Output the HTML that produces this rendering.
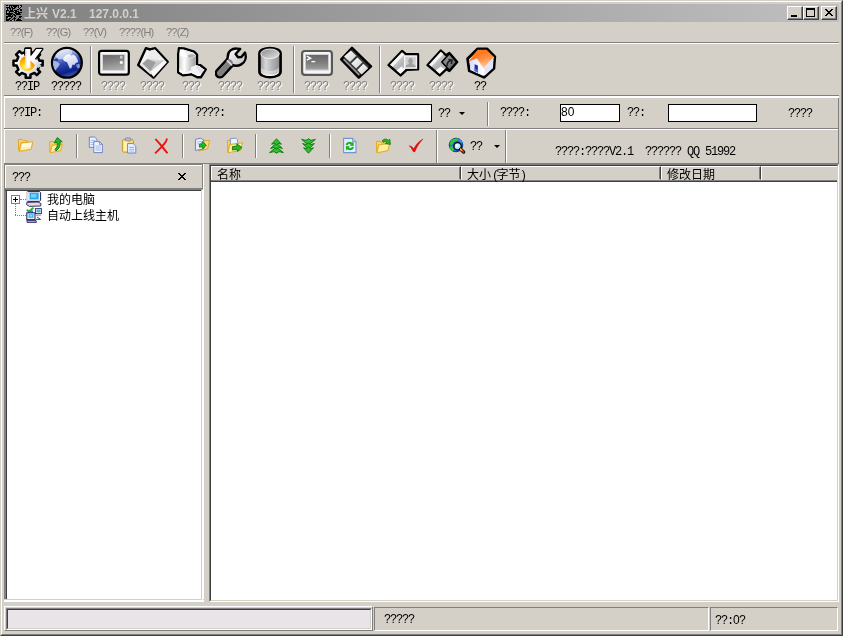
<!DOCTYPE html>
<html lang="zh">
<head>
<meta charset="utf-8">
<title>上兴 V2.1</title>
<style>
html,body{margin:0;padding:0;}
body{width:843px;height:636px;overflow:hidden;background:#d4d0c8;position:relative;
 font-family:"Liberation Mono","Noto Sans CJK SC",monospace;font-size:12px;color:#000;}
.abs{position:absolute;}
#frame div{position:absolute;}
.mono{font-family:"Liberation Mono","Noto Sans CJK SC",monospace;font-size:12px;letter-spacing:-1.2px;line-height:12px;white-space:pre;}
.cjk{font-family:"Liberation Sans","Noto Sans CJK SC",sans-serif;font-size:12px;line-height:12px;white-space:pre;}
.tah{font-family:"Liberation Sans","Noto Sans CJK SC",sans-serif;font-size:11px;line-height:12px;white-space:pre;}
.menu{letter-spacing:-0.75px;color:#808080;}
.dis{color:#808080;text-shadow:1px 1px 0 #fff;}
.hl{position:absolute;height:1px;}
.vl{position:absolute;width:1px;}
.inp{position:absolute;background:#fff;border:1px solid #000;box-sizing:border-box;}
.sep{position:absolute;width:1px;background:#808080;border-right:1px solid #fff;}
.lbl{position:absolute;text-align:center;width:60px;}
.hcell{height:14px;box-sizing:border-box;border:1px solid;border-color:#fff #404040 #d4d0c8 #fff;box-shadow:inset -1px 0 0 #808080;}
.cbtn{width:16px;height:14px;box-sizing:border-box;background:#d4d0c8;border:1px solid;border-color:#fff #404040 #404040 #fff;box-shadow:inset -1px -1px 0 #808080;}
</style>
</head>
<body>
<div id="root" style="position:absolute;left:0;top:0;width:843px;height:636px;will-change:transform;">
<!-- window frame -->
<div id="frame">
 <div style="left:0;top:0;width:843px;height:636px;box-sizing:border-box;border:1px solid;border-color:#d4d0c8 #404040 #404040 #d4d0c8;"></div>
 <div style="left:1px;top:1px;width:841px;height:634px;box-sizing:border-box;border:1px solid;border-color:#fff #808080 #808080 #fff;"></div>
</div>

<!-- title bar -->
<div class="abs" id="title" style="left:4px;top:4px;width:835px;height:18px;background:linear-gradient(to right,#808080 0%,#c0c0c0 100%);"></div>
<svg class="abs" style="left:6px;top:5px" width="16" height="16" viewBox="0 0 16 16" shape-rendering="crispEdges">
 <path d="M0 0h2v1h-2zM3 0h10v1h-10zM14 0h2v1h-2zM3 1h1v1h-1zM5 1h1v1h-1zM7 1h4v1h-4zM12 1h1v1h-1zM15 1h1v1h-1zM0 2h4v1h-4zM5 2h2v1h-2zM8 2h2v1h-2zM12 2h1v1h-1zM14 2h1v1h-1zM1 3h1v1h-1zM3 3h2v1h-2zM6 3h3v1h-3zM13 3h1v1h-1zM1 4h1v1h-1zM4 4h1v1h-1zM6 4h1v1h-1zM11 4h2v1h-2zM14 4h2v1h-2zM0 5h3v1h-3zM4 5h3v1h-3zM8 5h3v1h-3zM14 5h2v1h-2zM0 6h1v1h-1zM3 6h5v1h-5zM9 6h4v1h-4zM0 7h1v1h-1zM3 7h1v1h-1zM8 7h3v1h-3zM12 7h4v1h-4zM0 8h7v1h-7zM9 8h5v1h-5zM0 9h6v1h-6zM7 9h2v1h-2zM10 9h5v1h-5zM2 10h3v1h-3zM6 10h1v1h-1zM8 10h2v1h-2zM0 11h7v1h-7zM9 11h1v1h-1zM13 11h3v1h-3zM0 12h2v1h-2zM5 12h1v1h-1zM8 12h1v1h-1zM13 12h2v1h-2zM0 13h1v1h-1zM3 13h2v1h-2zM7 13h3v1h-3zM12 13h1v1h-1zM0 14h4v1h-4zM6 14h1v1h-1zM8 14h1v1h-1zM11 14h4v1h-4zM0 15h3v1h-3zM4 15h2v1h-2zM8 15h1v1h-1zM10 15h6v1h-6z" fill="#000"/>
 <path d="M0 1h1v1h-1zM2 1h1v1h-1zM13 1h2v1h-2zM7 2h1v1h-1zM13 2h1v1h-1zM11 3h1v1h-1zM15 3h1v1h-1zM0 4h1v1h-1zM8 6h1v1h-1zM13 6h1v1h-1zM1 7h1v1h-1zM11 7h1v1h-1zM8 8h1v1h-1zM2 12h1v1h-1zM15 14h1v1h-1zM6 15h1v1h-1z" fill="#b0b0b0"/>
</svg>
<div class="abs" style="left:24px;top:7px;color:#d4d0c8;font-family:'Liberation Sans','Noto Sans CJK SC',sans-serif;font-weight:bold;font-size:12px;line-height:14px;white-space:pre;">上兴</div>
<div class="abs" style="left:52px;top:7px;color:#d4d0c8;font-family:'Liberation Sans','Noto Sans CJK SC',sans-serif;font-weight:bold;font-size:12px;line-height:14px;white-space:pre;">V2.1</div>
<div class="abs" style="left:89px;top:7px;color:#d4d0c8;font-family:'Liberation Sans','Noto Sans CJK SC',sans-serif;font-weight:bold;font-size:12px;line-height:14px;white-space:pre;">127.0.0.1</div>

<!-- caption buttons -->
<div class="abs cbtn" style="left:787px;top:6px;"><div style="position:absolute;left:3px;top:8px;width:6px;height:2px;background:#000"></div></div>
<div class="abs cbtn" style="left:803px;top:6px;"><div style="position:absolute;left:2px;top:1px;width:9px;height:9px;box-sizing:border-box;border:1px solid #000;border-top-width:2px"></div></div>
<div class="abs cbtn" style="left:821px;top:6px;"><svg style="position:absolute;left:3px;top:2px" width="8" height="7" viewBox="0 0 8 7" shape-rendering="crispEdges"><path d="M0 0h2v1h-2zM6 0h2v1h-2zM1 1h2v1h-2zM5 1h2v1h-2zM2 2h4v1h-4zM3 3h2v1h-2zM2 4h4v1h-4zM1 5h2v1h-2zM5 5h2v1h-2zM0 6h2v1h-2zM6 6h2v1h-2z" fill="#000"/></svg></div>

<!-- menu bar -->
<div class="abs tah menu" style="left:10px;top:26px;">??(F)</div>
<div class="abs tah menu" style="left:46px;top:26px;">??(G)</div>
<div class="abs tah menu" style="left:83px;top:26px;">??(V)</div>
<div class="abs tah menu" style="left:119px;top:26px;">????(H)</div>
<div class="abs tah menu" style="left:166px;top:26px;">??(Z)</div>

<!-- toolbar 1 -->
<div class="hl" style="left:4px;top:42px;width:835px;background:#808080"></div>
<div class="hl" style="left:4px;top:43px;width:835px;background:#fff"></div>
<div class="hl" style="left:4px;top:95px;width:835px;background:#808080"></div>

<!-- address band -->
<div class="hl" style="left:4px;top:96px;width:835px;height:2px;background:#fff"></div>
<div class="vl" style="left:4px;top:96px;height:32px;background:#fff"></div>
<div class="vl" style="left:838px;top:98px;height:31px;background:#808080"></div>
<div class="hl" style="left:4px;top:128px;width:835px;background:#808080"></div>

<!-- toolbar 2 -->
<div class="hl" style="left:4px;top:129px;width:834px;background:#fff"></div>
<div class="vl" style="left:4px;top:129px;height:34px;background:#fff"></div>
<div class="vl" style="left:838px;top:129px;height:35px;background:#808080"></div>
<div class="hl" style="left:4px;top:163px;width:835px;background:#808080"></div>

<!-- ===== toolbar1 icons ===== -->
<svg class="abs" style="left:12px;top:47px" width="34" height="33" viewBox="0 0 34 33" overflow="visible">
 <defs>
  <radialGradient id="gO" cx="0.35" cy="0.75" r="0.7"><stop offset="0" stop-color="#fff06a"/><stop offset="0.5" stop-color="#ffc400"/><stop offset="1" stop-color="#f08000"/></radialGradient>
  <linearGradient id="gG" x1="0" y1="0" x2="1" y2="1"><stop offset="0" stop-color="#ffffff"/><stop offset="0.55" stop-color="#f4f4f8"/><stop offset="1" stop-color="#b4b4c4"/></linearGradient>
  <linearGradient id="gK" x1="0" y1="0" x2="1" y2="1"><stop offset="0" stop-color="#ffffff"/><stop offset="0.5" stop-color="#ffffff"/><stop offset="1" stop-color="#b8b8cc"/></linearGradient>
  <clipPath id="cK"><rect x="0" y="-2" width="34" height="14.5"/></clipPath>
 </defs>
 <path d="M27.45 13.78L30.71 13.84L30.71 18.56L27.45 18.62L25.83 22.51L28.10 24.86L24.76 28.20L22.41 25.93L18.52 27.55L18.46 30.81L13.74 30.81L13.68 27.55L9.79 25.93L7.44 28.20L4.10 24.86L6.37 22.51L4.75 18.62L1.49 18.56L1.49 13.84L4.75 13.78L6.37 9.89L4.10 7.54L7.44 4.20L9.79 6.47L13.68 4.85L13.74 1.59L18.46 1.59L18.52 4.85L22.41 6.47L24.76 4.20L28.10 7.54L25.83 9.89Z" fill="url(#gG)" stroke="#000" stroke-width="2.5" stroke-linejoin="round"/>
 <path d="M13.4 2 L18.4 2 L18.4 9.8 L24.4 2 L30.2 2 L22.8 12 L29.6 19.2 L26 21 L18.4 13.6 L18.4 21.2 L13.4 21.2 Z" fill="none" stroke="#000" stroke-width="2.5" stroke-linejoin="round" clip-path="url(#cK)"/>
 <circle cx="15.4" cy="16.5" r="8.6" fill="#e8e8f0"/>
 <circle cx="15.4" cy="16.5" r="7.6" fill="url(#gO)"/>
 <path d="M13.4 2 L18.4 2 L18.4 9.8 L24.4 2 L30.2 2 L22.8 12 L29.6 19.2 L26 21 L18.4 13.6 L18.4 21.2 L13.4 21.2 Z" fill="url(#gK)"/>
 <path d="M13.4 2 L14.4 2 L14.4 21.2 L13.4 21.2 Z" fill="#d8d8e0"/>
</svg>

<svg class="abs" style="left:51px;top:46px" width="33" height="34" viewBox="0 0 33 34" overflow="visible">
 <defs>
  <linearGradient id="gB" x1="0.3" y1="0" x2="0.6" y2="1"><stop offset="0" stop-color="#dfe6fb"/><stop offset="0.25" stop-color="#8ea2e0"/><stop offset="0.5" stop-color="#2f4cb0"/><stop offset="0.8" stop-color="#0c1f88"/><stop offset="1" stop-color="#4a68c4"/></linearGradient>
  <linearGradient id="gL" x1="0" y1="0" x2="0.4" y2="1"><stop offset="0" stop-color="#ffffff"/><stop offset="1" stop-color="#c4cef0"/></linearGradient>
 </defs>
 <circle cx="15.9" cy="16.8" r="14.9" fill="url(#gB)" stroke="#000" stroke-width="2.3"/>
 <ellipse cx="13" cy="8.2" rx="8.6" ry="4.6" fill="#fff" opacity="0.5" transform="rotate(-18 13 8.2)"/>
 <path d="M12.4 11.8 L15.2 8.9 L17.8 8 L20.3 9.6 L22.2 8.6 L24.7 10.2 L26.6 13.4 L27.2 15.9 L24.7 17.1 L23.4 19 L21.5 18.4 L20.3 22.2 L18.7 22.5 L17.1 18.4 L15.9 15.9 L13.4 15.2 L12.1 13.4 Z" fill="url(#gL)"/>
 <path d="M2.3 14.6 L5.2 15.2 L8.9 17.8 L7.7 20.3 L5.8 22.2 L4.5 24.7 L3 22.2 L2 18.4 Z" fill="#a4b2e6"/>
 <path d="M25.3 18.4 L28.4 17.8 L29.1 20.9 L27.2 22.8 L25.6 20.9 Z" fill="#7c90d4"/>
 <path d="M3 13.6 L6 12 L7.6 14.6 L5.2 15.2 L2.3 14.6 Z" fill="#16288c" opacity="0.7"/>
</svg>

<!-- monitor (disabled) -->
<svg class="abs" style="left:98px;top:47px" width="32" height="32" viewBox="0 0 32 32">
 <defs><linearGradient id="gM" x1="0" y1="0" x2="0.25" y2="1"><stop offset="0" stop-color="#686868"/><stop offset="0.5" stop-color="#848484"/><stop offset="1" stop-color="#a8a8a8"/></linearGradient></defs>
 <rect x="1.1" y="3.95" width="29.7" height="23.7" rx="2.4" fill="#f6f6f6" stroke="#000" stroke-width="2.2"/>
 <rect x="4.7" y="8" width="21.9" height="15.1" fill="url(#gM)"/>
 <rect x="4.3" y="7.6" width="22.7" height="15.9" fill="none" stroke="#d4d4d4" stroke-width="0.9"/>
 <rect x="22" y="8.8" width="2.6" height="2.8" fill="#cacaca"/>
 <circle cx="23.3" cy="15.4" r="1.6" fill="#f4f4f4"/>
</svg>

<!-- papers diamond (disabled) -->
<svg class="abs" style="left:137px;top:47px" width="32" height="32" viewBox="0 0 32 32">
 <defs><linearGradient id="gP" x1="0" y1="0.2" x2="1" y2="0.6"><stop offset="0" stop-color="#ffffff"/><stop offset="0.55" stop-color="#e6e6e6"/><stop offset="1" stop-color="#c4c4c4"/></linearGradient></defs>
 <path d="M8.9 1.2 L13 2.5 L18.2 1.2 L30.7 14.7 L16.5 30.6 L1.2 18 Z" fill="url(#gP)" stroke="#000" stroke-width="2.4" stroke-linejoin="round"/>
 <path d="M13.6 3.4 L17.8 2.4 L29.4 14.8 L27.2 13.4 L10.5 12.1 Z" fill="#ececec"/>
 <path d="M10.5 12.1 L27.2 13.4 L19 15.2 Z" fill="#d4d4d4"/>
 <path d="M10.5 12.1 L19 15.2 L13.4 24.7 L5.2 16.5 Z" fill="#9e9e9e"/>
 <path d="M19 15.2 L27.2 13.4 L13.4 24.7 Z" fill="#c4c4c4"/>
 <path d="M13.4 24.7 L27.2 13.4 L30 15.2 L16.5 30 Z" fill="#f8f8f8"/>
 <path d="M3 18 L13.4 27.4 L15 26 L5.2 16.5 Z" fill="#e4e4e4"/>
</svg>

<!-- database + sheet (disabled) -->
<svg class="abs" style="left:176px;top:47px" width="32" height="32" viewBox="0 0 32 32">
 <defs><linearGradient id="gD" x1="0" y1="0" x2="1" y2="0"><stop offset="0" stop-color="#d4d4d4"/><stop offset="0.3" stop-color="#ffffff"/><stop offset="0.7" stop-color="#c4c4c4"/><stop offset="1" stop-color="#a0a0a0"/></linearGradient></defs>
 <path d="M3 1.2 L7.8 1.4 L18 4.6 L21 7.6 L21 17 L24.4 18.2 L29.8 22.4 L25 30.2 L21.2 30.2 L15.4 27.2 L7.2 28.4 L2.2 25.4 L2.2 7.4 Z" fill="#fff" stroke="#000" stroke-width="2.4" stroke-linejoin="round"/>
 <path d="M3.4 8 C5 12 16 12.6 19.8 8.4 L19.8 20 C16 26.6 6 27 3.4 24.6 Z" fill="url(#gD)"/>
 <path d="M3.8 2.6 L7.8 2.8 L17.6 5.8 L19.8 8.2 C16 12 7 11.8 3.6 8.4 Z" fill="#ededed"/>
 <path d="M11 9 C13 7 17 6.6 19.4 8.4 C17 10.4 14 11 11 10.6 Z" fill="#b0b0b0"/>
 <path d="M4 3 L7.6 3.2 L12.4 10.2 C8 10.4 5 9.2 3.8 7.8 Z" fill="#ffffff"/>
 <path d="M3.4 21 C6 25.6 14 26 15.6 22 L15.6 26 L7.2 27.2 L3.4 24.8 Z" fill="#f8f8f8"/>
 <path d="M14.9 20.3 L20.3 18.1 L28.4 23.1 L22.8 28.6 L15.9 26.6 Z" fill="#f2f2f2"/>
 <path d="M20.3 18.1 L28.4 23.1 L24.6 26.8 L20 21 Z" fill="#e2e2e2"/>
</svg>

<!-- wrench (disabled) -->
<svg class="abs" style="left:215px;top:47px" width="32" height="32" viewBox="0 0 32 32">
 <defs><linearGradient id="gW" x1="0" y1="0" x2="1" y2="1"><stop offset="0" stop-color="#ffffff"/><stop offset="1" stop-color="#bcbcbc"/></linearGradient>
 <linearGradient id="gW2" x1="0" y1="0" x2="1" y2="1"><stop offset="0" stop-color="#8e8e8e"/><stop offset="1" stop-color="#6a6a6a"/></linearGradient></defs>
 <g stroke-linejoin="round" stroke-linecap="round">
 <path d="M5 26.2 L15.4 14.8" stroke="#000" stroke-width="10.8" fill="none"/>
 <path d="M12.8 9.4 C12.8 4.2 17 1.2 22 1.6 L25.2 2 L20.6 7 L23 10.2 L26.4 10 L30 5.6 C31.6 10 30.6 14.8 26.2 17.4 C23 19.2 19 18.8 16.6 17.6 L12.2 13.4 Z" fill="url(#gW)" stroke="#000" stroke-width="2.4"/>
 <path d="M5 26.2 L14.6 15.6" stroke="url(#gW2)" stroke-width="5.8" fill="none"/>
 <path d="M5 26.2 L14.6 15.6" stroke="#808080" stroke-width="5.8" fill="none"/>
 <path d="M12.4 13.8 L16.6 17.8" stroke="#dcdcdc" stroke-width="1.8" fill="none"/>
 </g>
</svg>

<!-- cylinder (disabled) -->
<svg class="abs" style="left:254px;top:46px" width="32" height="33" viewBox="0 0 32 33">
 <defs>
  <linearGradient id="gC" x1="0" y1="0" x2="1" y2="0"><stop offset="0" stop-color="#909090"/><stop offset="0.3" stop-color="#d8d8d8"/><stop offset="0.6" stop-color="#b4b4b4"/><stop offset="1" stop-color="#8a8a8a"/></linearGradient>
  <linearGradient id="gC2" x1="0" y1="0" x2="1" y2="1"><stop offset="0" stop-color="#8a8a8a"/><stop offset="1" stop-color="#e4e4e4"/></linearGradient>
 </defs>
 <path d="M5.4 7.6 C5.4 0.2 26.6 0.2 26.6 7.6 L26.6 25.4 C26.6 33 5.4 33 5.4 25.4 Z" fill="url(#gC)" stroke="#000" stroke-width="2.6"/>
 <ellipse cx="16" cy="7.8" rx="9.2" ry="4.8" fill="url(#gC2)" stroke="#f0f0f0" stroke-width="0.9"/>
 <path d="M7 24.4 C8.4 29.6 23.6 29.6 25 24.4 L25 26 C23.6 31.4 8.4 31.4 7 26 Z" fill="#f4f4f4"/>
 <path d="M7 21.6 C10 26.2 22 26.2 25 21.6 L25 24.6 C22 29.2 10 29.2 7 24.6 Z" fill="#e4e4e4" opacity="0.6"/>
</svg>

<!-- terminal (disabled) -->
<svg class="abs" style="left:301px;top:47px" width="32" height="32" viewBox="0 0 32 32">
 <defs><linearGradient id="gT" x1="0" y1="0" x2="0" y2="1"><stop offset="0" stop-color="#666"/><stop offset="0.5" stop-color="#7c7c7c"/><stop offset="1" stop-color="#a0a0a0"/></linearGradient></defs>
 <rect x="1.1" y="4" width="29.8" height="23.8" rx="2.8" fill="#f6f6f6" stroke="#585858" stroke-width="2.2"/>
 <rect x="4.8" y="7.8" width="22.4" height="15" fill="url(#gT)"/>
 <rect x="4.4" y="7.4" width="23.2" height="15.8" fill="none" stroke="#cccccc" stroke-width="0.9"/>
 <path d="M5.8 9.2 L9.6 11.2 L5.8 13.2" fill="none" stroke="#fff" stroke-width="1.4"/>
 <path d="M10.4 14.6 H14.2" stroke="#fff" stroke-width="1.3"/>
</svg>

<!-- film (disabled) -->
<svg class="abs" style="left:340px;top:46px" width="33" height="33" viewBox="0 0 33 33">
 <defs><linearGradient id="gF" x1="0" y1="0" x2="1" y2="1"><stop offset="0" stop-color="#ffffff"/><stop offset="1" stop-color="#cccccc"/></linearGradient></defs>
 <path d="M12 1.8 L31 20.4 L18.8 31.6 L1.2 13.4 Z" fill="#383838" stroke="#000" stroke-width="2.4" stroke-linejoin="round"/>
 <path d="M10.8 4.6 L16.4 9.8 L10 16 L4 10.6 Z" fill="url(#gF)"/>
 <path d="M17.4 11.4 L22.4 16.2 L16.2 22.4 L11.2 17.4 Z" fill="url(#gF)"/>
 <path d="M23.4 17.8 L28.2 22.2 L21.6 28.6 L17.4 24 Z" fill="url(#gF)"/>
 <path d="M3 13.8 L18.6 29.6 L19.8 28.6 L4.2 12.8 Z" fill="#9a9a9a"/>
</svg>

<!-- sheet + portrait (disabled) -->
<svg class="abs" style="left:387px;top:47px" width="33" height="32" viewBox="0 0 33 32">
 <defs><linearGradient id="gS" x1="0" y1="0" x2="1" y2="1"><stop offset="0" stop-color="#f4f4f4"/><stop offset="0.5" stop-color="#b4b4b4"/><stop offset="1" stop-color="#e8e8e8"/></linearGradient></defs>
 <path d="M15 4 L19 7.2 L31 7.2 L31 22.4 L19.6 22.8 L13.6 28.4 L1.6 18 Z" fill="url(#gS)" stroke="#000" stroke-width="2.4" stroke-linejoin="round"/>
 <path d="M15 5.2 L17.6 7.4 L5.6 19.8 L3 17.8 Z" fill="#f4f4f4"/>
 <path d="M9.6 23.4 L13.4 26.8 L18 22.4 L14.4 19.6 Z" fill="#fafafa"/>
 <rect x="17" y="8.4" width="13.2" height="13.4" fill="#f4f4f4"/>
 <rect x="18.4" y="9.8" width="10.4" height="10.4" fill="#d0d0d0"/>
 <path d="M18.4 20.2 C18.8 17.4 21 17.6 22 16.4 C20.6 14.4 21.4 11 23.6 11 C25.8 11 26.6 14.4 25.2 16.4 C26.2 17.6 28.4 17.4 28.8 20.2 Z" fill="#a0a0a0"/>
</svg>

<!-- sheet + shortcut (disabled) -->
<svg class="abs" style="left:426px;top:47px" width="33" height="32" viewBox="0 0 33 32">
 <defs><linearGradient id="gS2" x1="0" y1="0" x2="1" y2="1"><stop offset="0" stop-color="#f4f4f4"/><stop offset="0.5" stop-color="#b0b0b0"/><stop offset="1" stop-color="#e8e8e8"/></linearGradient>
 <linearGradient id="gS3" x1="0" y1="0" x2="1" y2="1"><stop offset="0" stop-color="#a4a4a4"/><stop offset="1" stop-color="#585858"/></linearGradient></defs>
 <path d="M14.8 3.6 L20 8.2 L23.4 6 L31.2 15 L23.4 24 L20.4 22.2 L13.8 28.4 L1.6 18 Z" fill="url(#gS2)" stroke="#000" stroke-width="2.4" stroke-linejoin="round"/>
 <path d="M14.8 4.8 L17.4 7 L5.6 19.6 L3 17.8 Z" fill="#f4f4f4"/>
 <path d="M9.8 23.2 L13.6 26.8 L18.4 22.2 L14.8 19.4 Z" fill="#fafafa"/>
 <path d="M23.4 6.8 L30.6 15 L23.4 23.2 L15.8 15 Z" fill="url(#gS3)" stroke="#000" stroke-width="1.6" stroke-linejoin="round"/>
 <path d="M21 19 C21 15.6 22.6 14.2 25.2 13.6 M22.4 12.4 L26 13.2 L25.4 17" fill="none" stroke="#1c1c1c" stroke-width="1.5"/>
</svg>

<!-- house -->
<svg class="abs" style="left:465px;top:46px" width="33" height="34" viewBox="0 0 33 34">
 <defs>
  <linearGradient id="gH" x1="0.2" y1="0" x2="0.6" y2="1"><stop offset="0" stop-color="#ff6a10"/><stop offset="0.5" stop-color="#ff8a3a"/><stop offset="1" stop-color="#ffd0b0"/></linearGradient>
  <linearGradient id="gH2" x1="0" y1="0" x2="1" y2="0"><stop offset="0" stop-color="#d8dcff"/><stop offset="1" stop-color="#ffffff"/></linearGradient>
 </defs>
 <g transform="translate(16.2 17) scale(0.92) translate(-16.2 -17)">
 <path d="M12.4 1.6 L22.4 1.6 L31 10.2 L30 23 L19.2 32.6 L3.2 25.4 L1.4 12.4 Z" fill="#fff" stroke="#000" stroke-width="3" stroke-linejoin="round"/>
 <path d="M3.6 14.6 L10.6 11.6 L18.4 22.4 L18.8 31 L4.4 24.6 Z" fill="url(#gH2)"/>
 <path d="M19.6 22.4 L29.6 11.6 L29 22.4 L19.6 31 Z" fill="#e4e4f8"/>
 <path d="M9 18.4 L12.6 19.8 L12.6 27.4 L9 25.8 Z" fill="#2030a8"/>
 <path d="M9 23 L12.6 24.6 L12.6 27.4 L9 25.8 Z" fill="#4a70e0"/>
 <path d="M12.6 2.6 L22 2.6 L30 10.6 L19 23 L11 12 L2.6 15 Z" fill="url(#gH)"/>
 <path d="M12.6 2.6 L20.6 4.6 L11 12.4 L2.6 15 Z" fill="#ff7a24"/>
 <path d="M11 12 L19 23 L30 10.6" fill="none" stroke="#ffe0cc" stroke-width="1"/>
</g>
</svg>

<!-- toolbar1 separators -->
<div class="sep" style="left:90px;top:46px;height:47px"></div>
<div class="sep" style="left:293px;top:46px;height:47px"></div>
<div class="sep" style="left:379px;top:46px;height:47px"></div>

<!-- toolbar1 labels -->
<div class="lbl mono" style="left:-3px;top:81px;">??IP</div>
<div class="lbl mono" style="left:36px;top:81px;">?????</div>
<div class="lbl mono dis" style="left:83px;top:81px;">????</div>
<div class="lbl mono dis" style="left:122px;top:81px;">????</div>
<div class="lbl mono dis" style="left:161px;top:81px;">???</div>
<div class="lbl mono dis" style="left:200px;top:81px;">????</div>
<div class="lbl mono dis" style="left:239px;top:81px;">????</div>
<div class="lbl mono dis" style="left:286px;top:81px;">????</div>
<div class="lbl mono dis" style="left:325px;top:81px;">????</div>
<div class="lbl mono dis" style="left:372px;top:81px;">????</div>
<div class="lbl mono dis" style="left:411px;top:81px;">????</div>
<div class="lbl mono" style="left:450px;top:81px;">??</div>

<!-- address band contents -->
<div class="abs mono" style="left:12px;top:107px;">??IP:</div>
<div class="inp" style="left:60px;top:104px;width:129px;height:18px"></div>
<div class="abs mono" style="left:195px;top:107px;">????:</div>
<div class="inp" style="left:256px;top:104px;width:176px;height:18px"></div>
<div class="abs mono" style="left:438px;top:108px;">??</div>
<div class="abs" style="left:459px;top:112px;width:0;height:0;border-left:3px solid transparent;border-right:3px solid transparent;border-top:3px solid #000;"></div>
<div class="sep" style="left:487px;top:102px;height:24px"></div>
<div class="abs mono" style="left:500px;top:107px;">????:</div>
<div class="inp" style="left:560px;top:104px;width:60px;height:18px"></div>
<div class="abs tah" style="left:561px;top:106px;font-size:12px">80</div>
<div class="abs mono" style="left:627px;top:107px;">??:</div>
<div class="inp" style="left:668px;top:104px;width:89px;height:18px"></div>
<div class="abs mono" style="left:788px;top:108px;">????</div>


<!-- ===== toolbar2 icons ===== -->
<!-- open folder -->
<svg class="abs" style="left:17px;top:137px" width="17" height="17" viewBox="0 0 17 17">
 <path d="M1.5 2.5 H5.5 L6.5 3.8 H10.5 V5.4 H4 L2.4 13.5 H1.5 Z" fill="#f6d674" stroke="#e0a828" stroke-width="1"/>
 <path d="M4.2 6 L15.8 4.8 L14.2 12.2 L2.4 14.4 Z" fill="#fff2b0" stroke="#e4ae30" stroke-width="1.1" stroke-linejoin="round"/>
 <path d="M5.2 7 L14.4 6 L13.4 9.4 L4.4 10.6 Z" fill="#fffbe0"/>
</svg>
<!-- folder up -->
<svg class="abs" style="left:48px;top:136px" width="17" height="18" viewBox="0 0 17 18">
 <path d="M1.8 5.6 H5.6 L6.6 7 H12.4 V9 H4.4 L2.4 16 H1.8 Z" fill="#f6d674" stroke="#e0a828" stroke-width="1"/>
 <path d="M4.2 9.2 L14.4 8 L12.6 14.6 L2.2 16.8 Z" fill="#fff0a8" stroke="#e4ae30" stroke-width="1.1" stroke-linejoin="round"/>
 <path transform="translate(0 0.9)" d="M9.4 0.6 L14.2 4.8 L11.8 5 C12.6 8.4 11.6 11.6 8 14 L6.8 12.6 C9.2 10.6 9.8 8.2 9 5.4 L6 6 Z" fill="#28b428" stroke="#0c7c0c" stroke-width="0.9" stroke-linejoin="round"/>
</svg>
<!-- copy -->
<svg class="abs" style="left:88px;top:136px" width="17" height="18" viewBox="0 0 17 18">
 <path d="M1.3 1 H6.6 L9 3.4 V11.4 H1.3 Z" fill="#e8f0ff" stroke="#7484c4" stroke-width="1"/>
 <path d="M2.6 4.5 H7.6 M2.6 6.5 H7.6 M2.6 8.5 H7.6" stroke="#a8c0f0" stroke-width="1"/>
 <path d="M5.8 5.6 H11.6 L14.4 8.4 V16.6 H5.8 Z" fill="#f0f6ff" stroke="#7484c4" stroke-width="1"/>
 <path d="M7.4 10 H12.8 M7.4 12 H12.8 M7.4 14 H12.8" stroke="#98b8f0" stroke-width="1.1"/>
 <path d="M11.6 5.6 V8.4 H14.4" fill="none" stroke="#7484c4" stroke-width="0.9"/>
</svg>
<!-- paste -->
<svg class="abs" style="left:121px;top:137px" width="17" height="17" viewBox="0 0 17 17">
 <rect x="1.4" y="2.6" width="11" height="12.6" rx="1.4" fill="#f8d878" stroke="#c89c30" stroke-width="1"/>
 <rect x="2.6" y="4" width="4" height="10" fill="#fff0b8"/>
 <rect x="4.2" y="1" width="5.6" height="2.8" rx="1" fill="#c0c4d0" stroke="#80849c" stroke-width="0.9"/>
 <path d="M6.6 6.6 H12.2 L14.8 9.2 V16 H6.6 Z" fill="#eef4ff" stroke="#7484c4" stroke-width="1"/>
 <path d="M8.2 10.4 H13.2 M8.2 12.2 H13.2 M8.2 14 H13.2" stroke="#98b8f0" stroke-width="1.1"/>
</svg>
<!-- delete X -->
<svg class="abs" style="left:154px;top:138px" width="16" height="16" viewBox="0 0 16 16">
 <path d="M2 1.6 C4 3.6 6.4 6.6 8 8.4 C9.6 10.6 11.4 12.8 13 14.6" fill="none" stroke="#f01010" stroke-width="2" stroke-linecap="round"/>
 <path d="M12.8 1.2 C12.6 3.2 10.4 6 8 8.4 C6 10.6 3.8 12.8 1.6 14.8" fill="none" stroke="#f01010" stroke-width="1.8" stroke-linecap="round"/>
</svg>
<!-- doc to folder -->
<svg class="abs" style="left:194px;top:137px" width="17" height="17" viewBox="0 0 17 17">
 <path d="M6 4 L15.6 3.4 L13.6 12 L5 14 Z" fill="#f8dc80" stroke="#e0a828" stroke-width="1" stroke-linejoin="round"/>
 <path d="M1.4 2.4 L6.4 1.2 L9.8 3 L9.8 12 L1.4 13.4 Z" fill="#e8f0ff" stroke="#7080c0" stroke-width="1" stroke-linejoin="round"/>
 <path d="M2.8 5 L7.6 4.4 M2.8 7 L7.6 6.4" stroke="#a8c0f0" stroke-width="0.9"/>
 <path d="M8.2 4.4 L12.4 8.2 L8.6 12 L8.4 9.8 L5.4 10.2 L5.4 7.2 L8.2 6.8 Z" fill="#28b428" stroke="#0c7c0c" stroke-width="0.8" stroke-linejoin="round"/>
</svg>
<!-- folder move -->
<svg class="abs" style="left:226px;top:137px" width="18" height="17" viewBox="0 0 18 17">
 <path d="M1.6 3.4 H5 L6 4.6 H9 V7 H3.6 L2.2 15 H1.6 Z" fill="#f6d674" stroke="#e0a828" stroke-width="1"/>
 <path d="M4.4 1.6 L9.8 1.2 L11.6 3 L11.6 7 L4.4 7.6 Z" fill="#eef4ff" stroke="#7c8cc8" stroke-width="0.9" stroke-linejoin="round"/>
 <path d="M3.8 7.6 L16.6 5.8 L14.4 13.4 L2 15.8 Z" fill="#fff0a8" stroke="#e4ae30" stroke-width="1.1" stroke-linejoin="round"/>
 <path d="M6.4 9.6 L11 9 L10.8 6.8 L16 10.6 L11.4 14.6 L11.2 12.4 L6.4 13 Z" fill="#28b428" stroke="#0c7c0c" stroke-width="0.9" stroke-linejoin="round"/>
</svg>
<!-- up arrows -->
<svg class="abs" style="left:268px;top:138px" width="17" height="16" viewBox="0 0 17 16">
 <g fill="#30c030" stroke="#0c7c0c" stroke-width="1" stroke-linejoin="round">
 <path d="M8.5 9 L15.4 14.6 L11 13.6 L8.5 15.2 L6 13.6 L1.6 14.6 Z"/>
 <path d="M8.5 5 L14.4 10.4 L10.6 9.4 L8.5 11 L6.4 9.4 L2.6 10.4 Z"/>
 <path d="M8.5 0.8 L13.4 6.2 L10.2 5.4 L8.5 7 L6.8 5.4 L3.6 6.2 Z"/>
 </g>
</svg>
<!-- down arrows -->
<svg class="abs" style="left:300px;top:138px" width="17" height="16" viewBox="0 0 17 16">
 <g fill="#30c030" stroke="#0c7c0c" stroke-width="1" stroke-linejoin="round">
 <path d="M8.5 7 L15.4 1.4 L11 2.4 L8.5 0.8 L6 2.4 L1.6 1.4 Z"/>
 <path d="M8.5 11 L14.4 5.6 L10.6 6.6 L8.5 5 L6.4 6.6 L2.6 5.6 Z"/>
 <path d="M8.5 15.2 L13.4 9.8 L10.2 10.6 L8.5 9 L6.8 10.6 L3.6 9.8 Z"/>
 </g>
</svg>
<!-- refresh doc -->
<svg class="abs" style="left:342px;top:137px" width="16" height="17" viewBox="0 0 16 17">
 <path d="M1.6 1.4 H10.6 L14 4.8 V15.6 H1.6 Z" fill="#e4eeff" stroke="#7890d8" stroke-width="1.1" stroke-linejoin="round"/>
 <path d="M10.6 1.4 V4.8 H14" fill="#c0d0f8" stroke="#7890d8" stroke-width="0.9"/>
 <path d="M3.6 7.8 C4.4 4.8 8.2 4 10.2 5.8 L11.4 4.6 L11.8 9 L7.6 8.6 L8.8 7.4 C7.6 6.4 6.2 6.8 5.6 8.2 Z" fill="#14b414"/>
 <path d="M12 10.2 C11.2 13.2 7.4 14 5.4 12.2 L4.2 13.4 L3.8 9 L8 9.4 L6.8 10.6 C8 11.6 9.4 11.2 10 9.8 Z" fill="#14b414"/>
</svg>
<!-- folder with green arrow -->
<svg class="abs" style="left:375px;top:137px" width="17" height="17" viewBox="0 0 17 17">
 <path d="M1.6 4.4 H5.4 L6.4 5.8 H11 V7.6 H3.8 L2.2 15 H1.6 Z" fill="#f6d674" stroke="#e0a828" stroke-width="1"/>
 <path d="M3.8 7.8 L14.8 6.4 L12.8 13.6 L2 15.8 Z" fill="#fff0a0" stroke="#e4ae30" stroke-width="1.1" stroke-linejoin="round"/>
 <path d="M7 4 C9 1.6 11.6 1.6 13.4 3.4 L14.8 2.2 L15.4 7.4 L10.4 6.6 L11.8 5.2 C10.6 4 9.4 4 8.4 5.2 Z" fill="#28b428" stroke="#0c7c0c" stroke-width="0.8" stroke-linejoin="round"/>
</svg>
<!-- red check -->
<svg class="abs" style="left:407px;top:137px" width="18" height="17" viewBox="0 0 18 17">
 <path transform="translate(0.9 1.2) scale(0.9 0.84)" d="M1.4 9 C3 9 5 10.4 6.6 12.6 C9 7.4 12.4 3.4 16.8 1 C13 5 10 10 7.8 16 L6 16.2 C5 13.4 3.4 11 1.4 9 Z" fill="#f00808" stroke="#c00000" stroke-width="0.5"/>
</svg>
<!-- search globe -->
<svg class="abs" style="left:448px;top:137px" width="19" height="18" viewBox="0 0 19 18">
 <circle cx="8" cy="8" r="6.8" fill="#2c6ce0" stroke="#183888" stroke-width="1"/>
 <path d="M2 5.4 C3.6 2.4 7 1 10 1.8 C11 2.6 10.4 3.6 9 3.8 C6.6 4.2 5 5.4 4.4 7.4 C3.6 8.4 2.2 7.8 1.6 7 Z" fill="#34c834"/>
 <path d="M11 2.2 C13 3 14.2 4.6 14.6 6.6 C13.4 6 12 5.4 11.2 4.2 Z" fill="#2aa0f0"/>
 <path d="M1.6 9.6 C3.6 8.8 5.6 9.8 6 11.8 C5.8 13.4 4.8 14.2 4.2 14 C2.8 13 1.8 11.4 1.6 9.6 Z" fill="#34c834"/>
 <path d="M5 14.4 C6.4 14 8 14.4 9 14.8 C7.6 15.2 6 15 5 14.4 Z" fill="#1848c0"/>
 <circle cx="9.6" cy="9.2" r="3.7" fill="#a8ecff" stroke="#101828" stroke-width="1.5"/>
 <circle cx="9" cy="8.6" r="1.5" fill="#f0fcff"/>
 <path d="M12.6 12.2 L15.6 15" stroke="#101010" stroke-width="3.4" stroke-linecap="round"/>
 <path d="M12.8 12.4 L15.4 14.8" stroke="#f02818" stroke-width="1.8" stroke-linecap="round"/>
 <path d="M12.6 12.2 L13.6 13.2" stroke="#f8d020" stroke-width="1.6" stroke-linecap="round"/>
</svg>

<!-- toolbar2 separators -->
<div class="sep" style="left:76px;top:134px;height:24px"></div>
<div class="sep" style="left:182px;top:134px;height:24px"></div>
<div class="sep" style="left:255px;top:134px;height:24px"></div>
<div class="sep" style="left:329px;top:134px;height:24px"></div>
<div class="sep" style="left:436px;top:130px;height:33px"></div>
<div class="sep" style="left:505px;top:130px;height:33px"></div>
<div class="abs mono" style="left:470px;top:141px;">??</div>
<div class="abs" style="left:494px;top:145px;width:0;height:0;border-left:3px solid transparent;border-right:3px solid transparent;border-top:3px solid #000;"></div>
<div class="abs mono" style="left:555px;top:146px;">????:????V2.1  ?????? QQ 51992</div>

<!-- left panel -->
<div class="hl" style="left:4px;top:164px;width:199px;background:#808080"></div>
<div class="hl" style="left:5px;top:165px;width:197px;background:#fff"></div>
<div class="vl" style="left:4px;top:164px;height:436px;background:#808080"></div>
<div class="vl" style="left:5px;top:165px;height:24px;background:#fff"></div>
<div class="vl" style="left:202px;top:164px;height:25px;background:#808080"></div>
<div class="vl" style="left:203px;top:164px;height:438px;background:#fff"></div>
<div class="abs mono" style="left:12px;top:172px;">???</div>
<svg class="abs" style="left:178px;top:173px" width="8" height="7" viewBox="0 0 8 7" shape-rendering="crispEdges"><path d="M0 0h2v1h-2zM6 0h2v1h-2zM1 1h2v1h-2zM5 1h2v1h-2zM2 2h4v1h-4zM3 3h2v1h-2zM2 4h4v1h-4zM1 5h2v1h-2zM5 5h2v1h-2zM0 6h2v1h-2zM6 6h2v1h-2z" fill="#000"/></svg>
<div class="abs" style="left:5px;top:188px;width:196px;height:411px;box-sizing:border-box;background:#fff;border:solid;border-width:2px 0 0 2px;border-color:#808080 #fff #fff #404040;"></div>
<div class="vl" style="left:5px;top:188px;height:411px;background:#808080"></div>
<div class="hl" style="left:5px;top:190px;width:196px;background:#404040"></div>
<div class="hl" style="left:4px;top:188px;width:198px;height:2px;background:#808080"></div>
<div class="hl" style="left:4px;top:599px;width:200px;background:#d4d0c8"></div>
<div class="hl" style="left:4px;top:600px;width:200px;height:2px;background:#fff"></div>

<div class="vl" style="left:201px;top:190px;height:410px;background:#d4d0c8"></div>
<div class="vl" style="left:202px;top:190px;height:412px;background:#fff"></div>
<!-- tree -->
<div class="abs" style="left:11px;top:195px;width:9px;height:9px;box-sizing:border-box;border:1px solid #808080;background:#fff"></div>
<div class="abs" style="left:13px;top:199px;width:5px;height:1px;background:#000"></div>
<div class="abs" style="left:15px;top:197px;width:1px;height:5px;background:#000"></div>
<div class="abs" style="left:20px;top:199px;width:6px;height:0;border-top:1px dotted #808080"></div>
<div class="abs" style="left:15px;top:204px;width:0;height:11px;border-left:1px dotted #808080"></div>
<div class="abs" style="left:15px;top:215px;width:11px;height:0;border-top:1px dotted #808080"></div>
<div class="abs cjk" style="left:47px;top:194px;">我的电脑</div>
<div class="abs cjk" style="left:47px;top:210px;">自动上线主机</div>


<!-- tree icons -->
<svg class="abs" style="left:26px;top:191px" width="16" height="16" viewBox="0 0 16 16">
 <path d="M1.2 0.6 H13.6 L14.6 1.6 V9.2 L13.4 10.4 H1.2 Z" fill="#e8e8f0" stroke="#20205c" stroke-width="1"/>
 <rect x="3.6" y="1.8" width="9" height="6.6" fill="#28a8f4"/>
 <rect x="5" y="3" width="5.4" height="3.6" fill="#6cd4ff"/>
 <path d="M1.2 0.6 V10.4" stroke="#fff" stroke-width="1.2"/>
 <path d="M0.8 11.4 L12 11 L15 12.6 L14.6 15 L3.4 15.4 L0.6 13.6 Z" fill="#d8d8e4" stroke="#20205c" stroke-width="0.9"/>
 <path d="M3 13 L13 12.6" stroke="#f4e89c" stroke-width="1.2" stroke-dasharray="1.5 1"/>
</svg>
<svg class="abs" style="left:26px;top:207px" width="16" height="16" viewBox="0 0 16 16">
 <rect x="9.4" y="1.6" width="6" height="5" fill="#e4e4ec" stroke="#303068" stroke-width="0.9"/>
 <rect x="10.6" y="2.6" width="3.8" height="2.6" fill="#38b8f8"/>
 <rect x="9.6" y="7.4" width="5.6" height="1.4" fill="#a8a8b8"/>
 <path d="M11 10 L14.6 12.4 H10" fill="none" stroke="#2040c0" stroke-width="1"/>
 <rect x="1.8" y="3.4" width="5.2" height="3.6" fill="#2c8ce8"/>
 <rect x="0.8" y="5.8" width="8.2" height="6.8" fill="#ececf4" stroke="#20205c" stroke-width="1"/>
 <rect x="2.6" y="7.2" width="4.8" height="3.6" fill="#30b0f8"/>
 <rect x="3.6" y="8" width="2.6" height="1.6" fill="#8ce0ff"/>
 <path d="M0.8 13.6 H10 L10.4 15.4 H1.2 Z" fill="#c8c8d8" stroke="#20205c" stroke-width="0.9"/>
 <path d="M1.2 2.4 L3 3.6 L6.6 0.4 L7.8 1.2 L3.2 5.2 L0.6 3.4 Z" fill="#30c030" stroke="#108010" stroke-width="0.5"/>
</svg>

<!-- right panel -->
<div class="abs" style="left:209px;top:164px;width:630px;height:438px;box-sizing:border-box;border:1px solid;border-color:#808080 #fff #fff #808080;"></div>
<div class="abs" style="left:210px;top:165px;width:628px;height:436px;box-sizing:border-box;border:1px solid;border-color:#404040 #d4d0c8 #d4d0c8 #404040;background:#fff"></div>
<!-- header -->
<div class="abs" style="left:211px;top:166px;width:626px;height:16px;background:#d4d0c8;"></div>
<div class="hl" style="left:211px;top:180px;width:626px;background:#808080"></div>
<div class="hl" style="left:211px;top:181px;width:626px;background:#404040"></div>
<div class="abs hcell" style="left:211px;top:166px;width:250px;"></div>
<div class="abs hcell" style="left:461px;top:166px;width:200px;"></div>
<div class="abs hcell" style="left:661px;top:166px;width:100px;"></div>
<div class="hl" style="left:761px;top:166px;width:76px;background:#fff"></div>
<div class="vl" style="left:761px;top:166px;height:14px;background:#fff"></div>
<div class="abs cjk" style="left:217px;top:169px;">名称</div>
<div class="abs cjk" style="left:467px;top:169px;">大小<span style="margin-left:2.2px;letter-spacing:-0.6px">(</span>字节<span style="letter-spacing:1.6px;margin-left:1px">)</span></div>
<div class="abs cjk" style="left:667px;top:169px;">修改日期</div>

<!-- status bar -->
<div class="abs" style="left:4px;top:606px;width:369px;height:25px;box-sizing:border-box;border:1px solid;border-color:#fff #808080 #808080 #fff;"></div>
<div class="abs" style="left:6px;top:608px;width:366px;height:22px;box-sizing:border-box;border:1px solid;border-color:#808080 #fff #fff #808080;"></div>
<div class="abs" style="left:7px;top:609px;width:364px;height:20px;box-sizing:border-box;border:1px solid;border-color:#404040 #d4d0c8 #d4d0c8 #404040;background:#e8e4e8"></div>
<div class="abs" style="left:374px;top:607px;width:335px;height:24px;box-sizing:border-box;border:1px solid;border-color:#808080 #fff #fff #808080;"></div>
<div class="abs" style="left:710px;top:607px;width:128px;height:24px;box-sizing:border-box;border:1px solid;border-color:#808080 #fff #fff #808080;"></div>
<div class="abs mono" style="left:384px;top:614px;">?????</div>
<div class="abs mono" style="left:715px;top:614px;">??:<span style="font-family:'Liberation Sans',sans-serif;letter-spacing:-0.7px">0</span>?</div>
</div>
</body>
</html>
